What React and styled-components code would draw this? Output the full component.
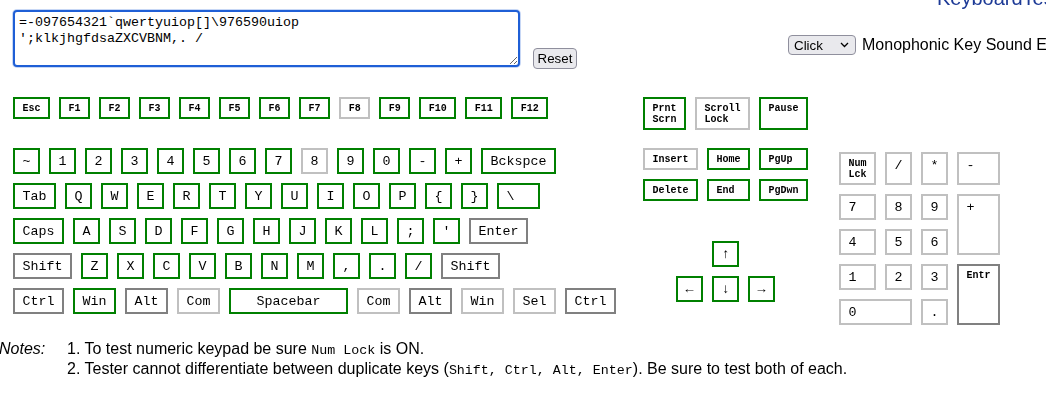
import React, { useEffect, useRef } from 'react';
import styled, { createGlobalStyle } from 'styled-components';

const Global = createGlobalStyle`
  html, body { margin: 0; padding: 0; overflow: hidden; background: #fff; }
  body { font-family: "Liberation Sans", Arial, sans-serif; font-size: 16px; color: #000; }
`;

const COLORS = { g: '#008000', l: '#c0c0c0', d: '#808080' };
const MONO = '"Liberation Mono", "Courier New", monospace';

const Page = styled.div`
  width: 1046px;
  height: 399px;
  overflow: hidden;
`;

const Top = styled.div`
  display: flex;
  height: 97px;
  padding-left: 13px;
  box-sizing: border-box;
`;

const LeftBlock = styled.div`
  display: flex;
  align-items: flex-end;
  padding-top: 10px;
  height: 57px;
  flex-shrink: 0;
`;

const Area = styled.textarea`
  box-sizing: border-box;
  width: 507px;
  height: 57px;
  margin: 0;
  padding: 3px 4px;
  border: 2px solid #1f5fd6;
  border-radius: 4px;
  box-shadow: 0 0 0 1px rgba(31, 95, 214, 0.25);
  outline: none;
  font-family: ${MONO};
  font-size: 13.333px;
  line-height: 16px;
  color: #000;
  background: #fff;
`;

const ResetButton = styled.button`
  box-sizing: border-box;
  margin: 0 0 -2px 13px;
  width: 44px;
  height: 21px;
  padding: 0;
  border: 1px solid #8f8f9d;
  border-radius: 4px;
  background: #e9e9ed;
  font-family: "Liberation Sans", Arial, sans-serif;
  font-size: 13.333px;
  color: #000;
`;

const RightBlock = styled.div`
  display: flex;
  flex-direction: column;
  margin-left: 211px;
  flex-shrink: 0;
`;

const Title = styled.div`
  margin: -12px 0 0 149px;
  font-size: 20px;
  line-height: 20px;
  color: #1d3a96;
  white-space: nowrap;
`;

const ControlRow = styled.div`
  display: flex;
  align-items: center;
  gap: 6px;
  margin-top: 27px;
  white-space: nowrap;
`;

const SelectWrap = styled.div`
  position: relative;
  width: 68px;
  height: 20px;
`;

const Select = styled.select`
  appearance: none;
  box-sizing: border-box;
  width: 68px;
  height: 20px;
  margin: 0;
  padding: 0 0 0 5px;
  border: 1px solid #8f8f9d;
  border-radius: 4px;
  background: #e9e9ed;
  font-family: "Liberation Sans", Arial, sans-serif;
  font-size: 13.333px;
  color: #000;
`;

const Chevron = styled.svg`
  position: absolute;
  right: 7px;
  top: 7px;
  pointer-events: none;
`;

const Label = styled.span`
  font-size: 16px;
`;

const Board = styled.div`
  display: grid;
  grid-template-columns: auto auto auto;
  justify-content: start;
  row-gap: 18px;
  padding-left: 13px;
  align-items: start;
`;

const Row = styled.div`
  display: flex;
  gap: 9px;
  align-items: stretch;
`;

const MainRows = styled.div`
  display: flex;
  flex-direction: column;
  gap: 9px;
`;

const NavCol = styled.div`
  margin-left: 27px;
  display: flex;
  flex-direction: column;
  align-items: center;
`;

const NavTop = styled(Row)`
  margin-left: 27px;
`;

const NavGrid = styled.div`
  display: grid;
  grid-template-columns: auto auto auto;
  gap: 9px;
`;

const ArrowGrid = styled.div`
  display: grid;
  grid-template-columns: repeat(3, 27px);
  grid-template-rows: 26px 26px;
  gap: 9px;
  margin-top: 40px;
`;

const Numpad = styled.div`
  display: grid;
  grid-template-columns: auto auto auto auto;
  gap: 9px;
  margin: 4px 0 0 31px;
`;

const Key = styled.div`
  box-sizing: border-box;
  border: 2px solid ${({ $c }) => COLORS[$c] || COLORS.g};
  padding: 3.5px 7.5px;
  background: #fff;
  color: #000;
  font-family: ${MONO};
  font-size: ${({ $small }) => ($small ? '10px' : '13.333px')};
  font-weight: ${({ $small }) => ($small ? 700 : 400)};
  line-height: ${({ $small }) => ($small ? '11px' : '15px')};
  white-space: pre;
  text-align: ${({ $center }) => ($center ? 'center' : 'left')};
  ${({ $w }) => ($w ? `width: ${$w}px;` : '')}
  ${({ $col }) => ($col ? `grid-column: ${$col};` : '')}
  ${({ $row }) => ($row ? `grid-row: ${$row};` : '')}
`;

const Notes = styled.div`
  display: grid;
  grid-template-columns: 68px auto;
  margin: 15px 0 0 -1px;
  font-size: 16px;
  line-height: 18px;
`;

const NotesLabel = styled.div`
  font-style: italic;
`;

const Code = styled.code`
  font-family: ${MONO};
  font-size: 13.333px;
`;

const fRow = [
  ['Esc'], ['F1'], ['F2'], ['F3'], ['F4'], ['F5'], ['F6'], ['F7'], ['F8', 'l'],
  ['F9'], ['F10'], ['F11'], ['F12'],
];

const mainRows = [
  [['~'], ['1'], ['2'], ['3'], ['4'], ['5'], ['6'], ['7'], ['8', 'l'], ['9'], ['0'], ['-'], ['+'], ['Bckspce']],
  [['Tab'], ['Q'], ['W'], ['E'], ['R'], ['T'], ['Y'], ['U'], ['I'], ['O'], ['P'], ['{'], ['}'], ['\\', 'g', 43]],
  [['Caps'], ['A'], ['S'], ['D'], ['F'], ['G'], ['H'], ['J'], ['K'], ['L'], [';'], ["'"], ['Enter', 'd']],
  [['Shift', 'd'], ['Z'], ['X'], ['C'], ['V'], ['B'], ['N'], ['M'], [','], ['.'], ['/'], ['Shift', 'd']],
  [['Ctrl', 'd'], ['Win'], ['Alt', 'd'], ['Com', 'l'], ['Spacebar', 'g', 119, true], ['Com', 'l'], ['Alt', 'd'], ['Win', 'l'], ['Sel', 'l'], ['Ctrl', 'd']],
];

const navTop = [['Prnt\nScrn'], ['Scroll\nLock', 'l'], ['Pause']];
const navKeys = [['Insert', 'l'], ['Home'], ['PgUp'], ['Delete'], ['End'], ['PgDwn']];

const padKeys = [
  { t: 'Num\nLck', s: true },
  { t: '/' },
  { t: '*' },
  { t: '-' },
  { t: '7' }, { t: '8' }, { t: '9' },
  { t: '+', col: 4, row: '2 / span 2' },
  { t: '4', col: 1, row: 3 }, { t: '5', col: 2, row: 3 }, { t: '6', col: 3, row: 3 },
  { t: '1', col: 1, row: 4 }, { t: '2', col: 2, row: 4 }, { t: '3', col: 3, row: 4 },
  { t: 'Entr', s: true, c: 'd', col: 4, row: '4 / span 2' },
  { t: '0', col: '1 / span 2', row: 5 },
  { t: '.', col: 3, row: 5 },
];

const TEXT = "=-097654321`qwertyuiop[]\\976590uiop\n';klkjhgfdsaZXCVBNM,. /";

export default function App() {
  const ref = useRef(null);
  useEffect(() => {
    const el = ref.current;
    if (el) {
      el.focus();
      el.setSelectionRange(TEXT.length, TEXT.length);
    }
  }, []);

  return (
    <Page>
      <Global />
      <Top>
        <LeftBlock>
          <Area ref={ref} defaultValue={TEXT} spellCheck={false} />
          <ResetButton type="button">Reset</ResetButton>
        </LeftBlock>
        <RightBlock>
          <Title>KeyboardTester.com</Title>
          <ControlRow>
            <SelectWrap>
              <Select defaultValue="Click">
                <option>Click</option>
                <option>None</option>
              </Select>
              <Chevron width="9" height="6" viewBox="0 0 9 6">
                <path d="M1 1 L4.5 4.5 L8 1" fill="none" stroke="#000" strokeWidth="1.3" />
              </Chevron>
            </SelectWrap>
            <Label>Monophonic Key Sound Effects</Label>
          </ControlRow>
        </RightBlock>
      </Top>

      <Board>
        <Row>
          {fRow.map(([t, c], i) => (
            <Key key={i} $small $c={c || 'g'}>{t}</Key>
          ))}
        </Row>
        <NavTop>
          {navTop.map(([t, c], i) => (
            <Key key={i} $small $c={c || 'g'}>{t}</Key>
          ))}
        </NavTop>
        <div />

        <MainRows>
          {mainRows.map((row, r) => (
            <Row key={r}>
              {row.map(([t, c, w, center], i) => (
                <Key key={i} $c={c || 'g'} $w={w} $center={center}>{t}</Key>
              ))}
            </Row>
          ))}
        </MainRows>

        <NavCol>
          <NavGrid>
            {navKeys.map(([t, c], i) => (
              <Key key={i} $small $c={c || 'g'}>{t}</Key>
            ))}
          </NavGrid>
          <ArrowGrid>
            <Key $col={2} $row={1}>↑</Key>
            <Key $col={1} $row={2}>←</Key>
            <Key $col={2} $row={2}>↓</Key>
            <Key $col={3} $row={2}>→</Key>
          </ArrowGrid>
        </NavCol>

        <Numpad>
          {padKeys.map((k, i) => (
            <Key key={i} $small={k.s} $c={k.c || 'l'} $col={k.col} $row={k.row}>{k.t}</Key>
          ))}
        </Numpad>
      </Board>

      <Notes>
        <NotesLabel>Notes:</NotesLabel>
        <div>
          <div>1. To test numeric keypad be sure <Code>Num Lock</Code> is ON.</div>
          <div>
            2. Tester cannot differentiate between duplicate keys (<Code>Shift, Ctrl, Alt, Enter</Code>). Be sure to test both of each.
          </div>
        </div>
      </Notes>
    </Page>
  );
}
